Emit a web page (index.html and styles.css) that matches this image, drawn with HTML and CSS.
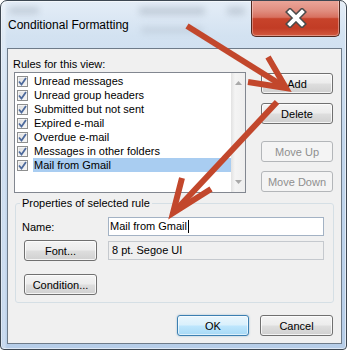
FILE: index.html
```html
<!DOCTYPE html>
<html>
<head>
<meta charset="utf-8">
<title>Conditional Formatting</title>
<link rel="stylesheet" href="styles.css">
</head>
<body>
<div class="window">
  <div class="glass-blur b1"></div>
  <div class="glass-blur b2"></div>
  <div class="glass-blur b3"></div>
  <div class="glass-blur b4"></div>
  <div class="titlebar">
    <span class="title">Conditional Formatting</span>
    <div class="close">
      <svg width="22" height="20" viewBox="0 0 22 20">
        <path d="M5 4 L17 16 M17 4 L5 16" stroke="#4a4a4a" stroke-width="7" stroke-linecap="square" fill="none"/>
        <path d="M5 4 L17 16 M17 4 L5 16" stroke="#ffffff" stroke-width="4" stroke-linecap="square" fill="none"/>
      </svg>
    </div>
  </div>
  <div class="client">
    <div class="rules-row">
      <div class="rules-col">
        <div class="rules-label">Rules for this view:</div>
        <div class="listbox">
          <div class="items">
            <div class="item"><span class="cb"><svg width="9" height="9" viewBox="0 0 9 9"><path d="M1 4.5 L3.5 7.5 L8 1" stroke="#4d6a9c" stroke-width="1.8" fill="none"/></svg></span><span class="item-text">Unread messages</span></div>
            <div class="item"><span class="cb"><svg width="9" height="9" viewBox="0 0 9 9"><path d="M1 4.5 L3.5 7.5 L8 1" stroke="#4d6a9c" stroke-width="1.8" fill="none"/></svg></span><span class="item-text">Unread group headers</span></div>
            <div class="item"><span class="cb"><svg width="9" height="9" viewBox="0 0 9 9"><path d="M1 4.5 L3.5 7.5 L8 1" stroke="#4d6a9c" stroke-width="1.8" fill="none"/></svg></span><span class="item-text">Submitted but not sent</span></div>
            <div class="item"><span class="cb"><svg width="9" height="9" viewBox="0 0 9 9"><path d="M1 4.5 L3.5 7.5 L8 1" stroke="#4d6a9c" stroke-width="1.8" fill="none"/></svg></span><span class="item-text">Expired e-mail</span></div>
            <div class="item"><span class="cb"><svg width="9" height="9" viewBox="0 0 9 9"><path d="M1 4.5 L3.5 7.5 L8 1" stroke="#4d6a9c" stroke-width="1.8" fill="none"/></svg></span><span class="item-text">Overdue e-mail</span></div>
            <div class="item"><span class="cb"><svg width="9" height="9" viewBox="0 0 9 9"><path d="M1 4.5 L3.5 7.5 L8 1" stroke="#4d6a9c" stroke-width="1.8" fill="none"/></svg></span><span class="item-text">Messages in other folders</span></div>
            <div class="item sel"><span class="cb"><svg width="9" height="9" viewBox="0 0 9 9"><path d="M1 4.5 L3.5 7.5 L8 1" stroke="#4d6a9c" stroke-width="1.8" fill="none"/></svg></span><span class="item-text">Mail from Gmail</span></div>
          </div>
          <div class="scrollbar">
            <svg width="7" height="4" viewBox="0 0 7 4"><path d="M0 4 L3.5 0 L7 4 Z" fill="#a9a9a9"/></svg>
            <svg width="7" height="4" viewBox="0 0 7 4"><path d="M0 0 L3.5 4 L7 0 Z" fill="#a9a9a9"/></svg>
          </div>
        </div>
      </div>
      <div class="side">
        <button class="btn">Add</button>
        <button class="btn gap-s">Delete</button>
        <button class="btn disabled gap-l">Move Up</button>
        <button class="btn disabled gap-s">Move Down</button>
      </div>
    </div>
    <fieldset class="props">
      <legend>Properties of selected rule</legend>
      <div class="row name-row">
        <span class="name-label">Name:</span>
        <div class="textbox">Mail from Gmail<span class="caret"></span></div>
      </div>
      <div class="row font-row">
        <button class="btn prop-btn">Font...</button>
        <div class="fontbox">8 pt. Segoe UI</div>
      </div>
      <div class="row cond-row">
        <button class="btn prop-btn">Condition...</button>
      </div>
    </fieldset>
    <div class="footer">
      <button class="btn default ok">OK</button>
      <button class="btn cancel">Cancel</button>
    </div>
  </div>
  <svg class="arrows" width="348" height="352" viewBox="0 0 348 352">
    <g stroke="#c2472c" stroke-width="6" fill="none" stroke-linecap="butt" stroke-linejoin="miter">
      <path d="M187 26 L283 86"/>
      <path d="M268 57 L286 88 L248 82"/>
      <path d="M277 102 L175 211"/>
      <path d="M182 178 L173 213 L211 189"/>
    </g>
  </svg>
</div>
</body>
</html>
```

FILE: styles.css
```css
* { box-sizing: border-box; }

html, body {
  margin: 0;
  padding: 0;
  background: #ffffff;
}

body {
  font-family: "Liberation Sans", Arial, sans-serif;
  font-size: 11px;
  color: #000;
}

.window {
  position: relative;
  width: 347px;
  height: 350px;
  border: 1px solid #3d4752;
  border-radius: 7px 7px 4px 4px;
  background:
    linear-gradient(90deg, rgba(255,255,255,0.0) 0, rgba(255,255,255,0.35) 3px, rgba(255,255,255,0) 6px),
    linear-gradient(180deg, #e4edf7 0%, #d3e2f1 10%, #c2d6ec 40%, #b6cde8 100%);
  box-shadow: inset 0 0 0 1px rgba(255,255,255,0.55);
  display: flex;
  flex-direction: column;
  overflow: hidden;
}

.glass-blur {
  position: absolute;
  background: #8e9aa8;
  filter: blur(3px);
  opacity: 0.35;
  border-radius: 3px;
}
.b1 { left: 8px; top: 6px; width: 30px; height: 7px; }
.b2 { left: 138px; top: 6px; width: 66px; height: 8px; }
.b3 { left: 226px; top: 6px; width: 18px; height: 8px; }
.b4 { left: 140px; top: 25px; width: 62px; height: 8px; opacity: 0.2; }

.titlebar {
  position: relative;
  height: 47px;
  flex: none;
  display: flex;
  align-items: flex-start;
  justify-content: space-between;
}

.title {
  font-size: 12px;
  line-height: 14px;
  margin: 17px 0 0 7px;
  color: #000;
}

.close {
  width: 89px;
  height: 37px;
  margin: -1px 6px 0 0;
  border: 1px solid #53291f;
  border-top: none;
  border-radius: 0 0 5px 5px;
  background: linear-gradient(180deg, #eba79b 0%, #e08d7f 30%, #d8705f 48%, #c7432b 52%, #c23c25 78%, #d1593f 100%);
  box-shadow: inset 0 0 0 1px rgba(255,255,255,0.35);
  display: flex;
  align-items: center;
  justify-content: center;
}

.client {
  flex: 1;
  margin: 0 4px 5px 6px;
  border: 1px solid #6e7b89;
  background: #f0f0f0;
  padding: 8px 8px 0 6px;
  display: flex;
  flex-direction: column;
}

.rules-row {
  display: flex;
  gap: 15px;
}

.rules-col {
  width: 232px;
}

.rules-label {
  line-height: 14px;
  margin-left: -1px;
}

.listbox {
  margin-top: 1px;
  height: 121px;
  border: 1px solid #828790;
  background: #fff;
  display: flex;
}

.items {
  flex: 1;
  padding: 1px 0 0 2px;
}

.item {
  height: 14px;
  display: flex;
  align-items: center;
}

.cb {
  width: 11px;
  height: 11px;
  margin-right: 5px;
  border: 1px solid #8e8f8f;
  background: linear-gradient(135deg, #dcdcdc, #f7f7f7);
  box-shadow: inset 0 0 0 1px #f4f4f4;
  display: flex;
  align-items: center;
  justify-content: center;
  flex: none;
}

.item-text {
  flex: 1;
  height: 14px;
  line-height: 14px;
  padding-left: 1px;
  white-space: nowrap;
}

.item.sel .item-text {
  background: #a9cdf1;
}

.scrollbar {
  width: 14px;
  background: linear-gradient(90deg, #e2e2e2 0, #f4f4f4 4px, #eeeeee 100%);
  display: flex;
  flex-direction: column;
  align-items: center;
  justify-content: space-between;
  padding: 8px 0 8px;
}

.side {
  width: 72px;
  margin-top: 16px;
  display: flex;
  flex-direction: column;
}

.btn {
  height: 21px;
  padding: 0;
  font: inherit;
  color: #000;
  border: 1px solid #707070;
  border-radius: 3px;
  background: linear-gradient(180deg, #f4f4f4 0%, #ececec 48%, #dedede 52%, #d0d0d0 100%);
  box-shadow: inset 0 0 0 1px rgba(255,255,255,0.75);
  display: flex;
  align-items: center;
  justify-content: center;
}

.btn.disabled {
  border-color: #b3b6b9;
  background: #f4f4f4;
  color: #8f8f8f;
  box-shadow: none;
}

.gap-s { margin-top: 9px; }
.gap-l { margin-top: 17px; }

.props {
  margin: 3px 0 0 1px;
  width: 319px;
  border: 1px solid #d5dfe5;
  border-radius: 3px;
  padding: 0 9px 7px 6px;
  min-width: 0;
}

.props legend {
  padding: 0 2px;
  margin-left: -2px;
  line-height: 14px;
}

.row {
  display: flex;
  align-items: center;
}

.name-row {
  margin-top: 7px;
  height: 19px;
}

.name-label {
  width: 86px;
}

.textbox {
  width: 216px;
  height: 19px;
  border: 1px solid #a3b2c4;
  background: #fff;
  padding-left: 1px;
  line-height: 17px;
  display: flex;
  align-items: center;
  white-space: nowrap;
}

.caret {
  display: inline-block;
  width: 1px;
  height: 13px;
  margin-left: 1px;
  background: #000;
}

.font-row {
  margin-top: 4px;
}

.prop-btn {
  width: 73px;
  margin-left: 2px;
}

.fontbox {
  width: 216px;
  height: 19px;
  margin-left: 11px;
  border: 1px solid #c5c9ce;
  background: #f0f0f0;
  padding-left: 3px;
  line-height: 17px;
}

.cond-row {
  margin-top: 13px;
}

.footer {
  display: flex;
  justify-content: flex-end;
  gap: 11px;
  margin-top: 12px;
}

.ok { width: 72px; }
.cancel { width: 73px; }

.btn.default {
  border-color: #3c7fb1;
  background: linear-gradient(180deg, #eaf6fd 0%, #d9f0fc 48%, #bee6fd 52%, #a7d9f5 100%);
  box-shadow: inset 0 0 0 1px rgba(255,255,255,0.6), 0 0 2px rgba(60,127,177,0.5);
}

.arrows {
  position: absolute;
  left: -1px;
  top: -1px;
  pointer-events: none;
}
```
